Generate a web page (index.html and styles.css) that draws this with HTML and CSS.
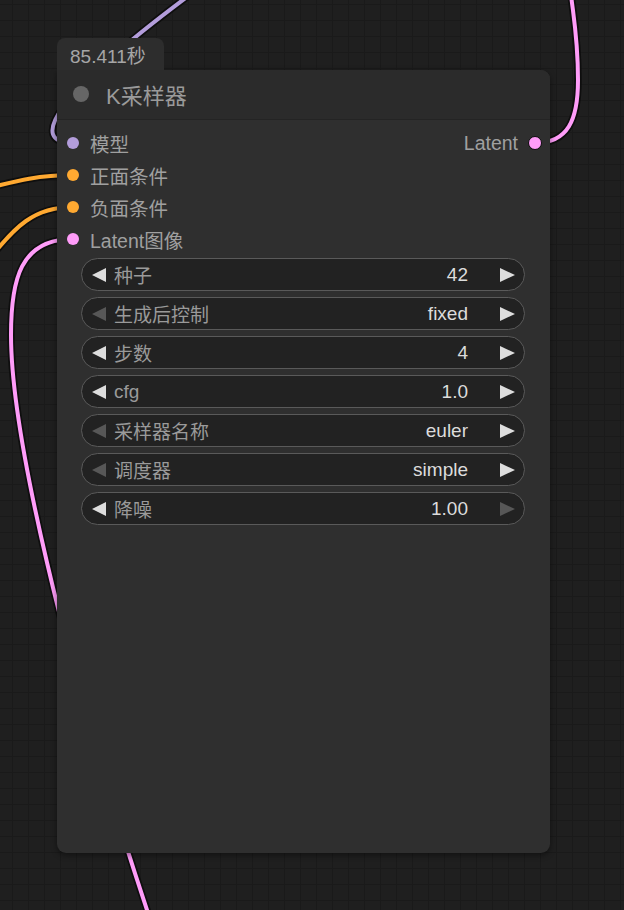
FILE: index.html
```html
<!DOCTYPE html>
<html lang="zh">
<head>
<meta charset="utf-8">
<title>K采样器</title>
<link rel="stylesheet" href="styles.css">
</head>
<body>
<div class="canvas">
  <svg class="links" width="624" height="910" viewBox="0 0 624 910">
    <g class="outline">
      <path d="M73 143 C30 143, 45 100, 210 -20"/>
      <path d="M73 175 C40 175, 20 180, -20 190"/>
      <path d="M73 207 C35 207, 15 225, -15 265"/>
      <path d="M73 239 C20 239, 11 280, 11 335 C11 430, 60 650, 152 925"/>
      <path d="M535 143 C568 143, 578 120, 578 80 C578 40, 574 20, 571 -5"/>
    </g>
    <path class="wire model" d="M73 143 C30 143, 45 100, 210 -20"/>
    <path class="wire cond" d="M73 175 C40 175, 20 180, -20 190"/>
    <path class="wire cond" d="M73 207 C35 207, 15 225, -15 265"/>
    <path class="wire latent" d="M73 239 C20 239, 11 280, 11 335 C11 430, 60 650, 152 925"/>
    <path class="wire latent" d="M535 143 C568 143, 578 120, 578 80 C578 40, 574 20, 571 -5"/>
  </svg>

  <div class="node">
    <div class="badge">85.411秒</div>
    <div class="card">
      <div class="title">
        <span class="title-dot"></span>
        <span class="title-text">K采样器</span>
      </div>
      <div class="body">
        <div class="slots">
          <div class="slot-row">
            <div class="slot-in"><span class="dot dot-model"></span><span>模型</span></div>
            <div class="slot-out"><span>Latent</span><span class="dot-out"></span></div>
          </div>
          <div class="slot-row">
            <div class="slot-in"><span class="dot dot-cond"></span><span>正面条件</span></div>
          </div>
          <div class="slot-row">
            <div class="slot-in"><span class="dot dot-cond"></span><span>负面条件</span></div>
          </div>
          <div class="slot-row">
            <div class="slot-in"><span class="dot dot-latent"></span><span>Latent图像</span></div>
          </div>
        </div>
        <div class="widgets">
          <div class="widget"><span class="arrow-l"></span><span class="w-label">种子</span><span class="w-value">42</span><span class="arrow-r"></span></div>
          <div class="widget"><span class="arrow-l off"></span><span class="w-label">生成后控制</span><span class="w-value">fixed</span><span class="arrow-r"></span></div>
          <div class="widget"><span class="arrow-l"></span><span class="w-label">步数</span><span class="w-value">4</span><span class="arrow-r"></span></div>
          <div class="widget"><span class="arrow-l"></span><span class="w-label">cfg</span><span class="w-value">1.0</span><span class="arrow-r"></span></div>
          <div class="widget"><span class="arrow-l off"></span><span class="w-label">采样器名称</span><span class="w-value">euler</span><span class="arrow-r"></span></div>
          <div class="widget"><span class="arrow-l off"></span><span class="w-label">调度器</span><span class="w-value">simple</span><span class="arrow-r"></span></div>
          <div class="widget"><span class="arrow-l"></span><span class="w-label">降噪</span><span class="w-value">1.00</span><span class="arrow-r off"></span></div>
        </div>
      </div>
    </div>
  </div>
</div>
</body>
</html>
```

FILE: styles.css
```css
* { box-sizing: border-box; }

html, body {
  margin: 0;
  padding: 0;
  background: #1e1e1e;
}

body {
  font-family: "Liberation Sans", "Noto Sans CJK SC", sans-serif;
}

.canvas {
  position: relative;
  width: 624px;
  height: 910px;
  overflow: hidden;
  background-color: #1f1f1f;
  background-image:
    linear-gradient(to right, #1a1a1a 1px, transparent 1px),
    linear-gradient(to bottom, #1a1a1a 1px, transparent 1px);
  background-size: 16px 16px;
  background-position: 12px 4px;
}

.links {
  position: absolute;
  left: 0;
  top: 0;
}

.outline path {
  fill: none;
  stroke: #0e0e0e;
  stroke-width: 7.5;
}

.wire {
  fill: none;
  stroke-width: 4;
}

.wire.model { stroke: #b39ddb; }
.wire.cond { stroke: #ffa931; }
.wire.latent { stroke: #ff9cf9; }

.node {
  position: absolute;
  left: 57px;
  top: 38px;
  width: 493px;
}

.badge {
  display: inline-flex;
  align-items: center;
  height: 32px;
  padding: 0 18px 0 13px;
  background: #2d2d2d;
  color: #a6a6a6;
  font-size: 19px;
  border-radius: 8px 8px 0 0;
}

.card {
  height: 783px;
  background: #2f2f2f;
  border-radius: 0 9px 9px 9px;
  box-shadow: 0 2px 6px rgba(0, 0, 0, 0.45);
  overflow: hidden;
}

.title {
  display: flex;
  align-items: center;
  height: 50px;
  padding-left: 16px;
  padding-bottom: 1px;
  background: #2b2b2b;
  border-bottom: 1px solid #242424;
}

.title-dot {
  width: 16px;
  height: 16px;
  border-radius: 50%;
  background: #666666;
  margin-right: 17px;
}

.title-text {
  font-size: 22px;
  color: #9a9a9a;
}

.slots {
  padding-top: 7px;
}

.slot-row {
  display: flex;
  align-items: center;
  justify-content: space-between;
  height: 32px;
  padding: 0 8px 0 10px;
  font-size: 19.5px;
  color: #a0a0a0;
}

.slot-in,
.slot-out {
  display: flex;
  align-items: center;
}

.dot {
  width: 12px;
  height: 12px;
  border-radius: 50%;
  margin-right: 11px;
}

.dot-model { background: #b39ddb; }
.dot-cond { background: #ffa931; }
.dot-latent { background: #ff9cf9; }

.dot-out {
  width: 14px;
  height: 14px;
  border-radius: 50%;
  background: #ff9cf9;
  border: 1.5px solid #0c0c0c;
  margin-left: 10px;
}

.widgets {
  display: flex;
  flex-direction: column;
  gap: 6px;
  margin-top: 3px;
  padding: 0 25px 0 24px;
}

.widget {
  display: flex;
  align-items: center;
  height: 33px;
  padding: 0 9px 0 10px;
  background: #222222;
  border: 1px solid #5a5a5a;
  border-radius: 17px;
  font-size: 19px;
}

.arrow-l {
  width: 0;
  height: 0;
  border-top: 7.5px solid transparent;
  border-bottom: 7.5px solid transparent;
  border-right: 14px solid #dddddd;
  margin-right: 8px;
}

.arrow-r {
  width: 0;
  height: 0;
  border-top: 7.5px solid transparent;
  border-bottom: 7.5px solid transparent;
  border-left: 15px solid #dddddd;
  margin-left: 32px;
}

.arrow-l.off { border-right-color: #575757; }
.arrow-r.off { border-left-color: #575757; }

.w-label {
  flex: 1;
  color: #9a9a9a;
}

.w-value {
  color: #dcdcdc;
}
```
